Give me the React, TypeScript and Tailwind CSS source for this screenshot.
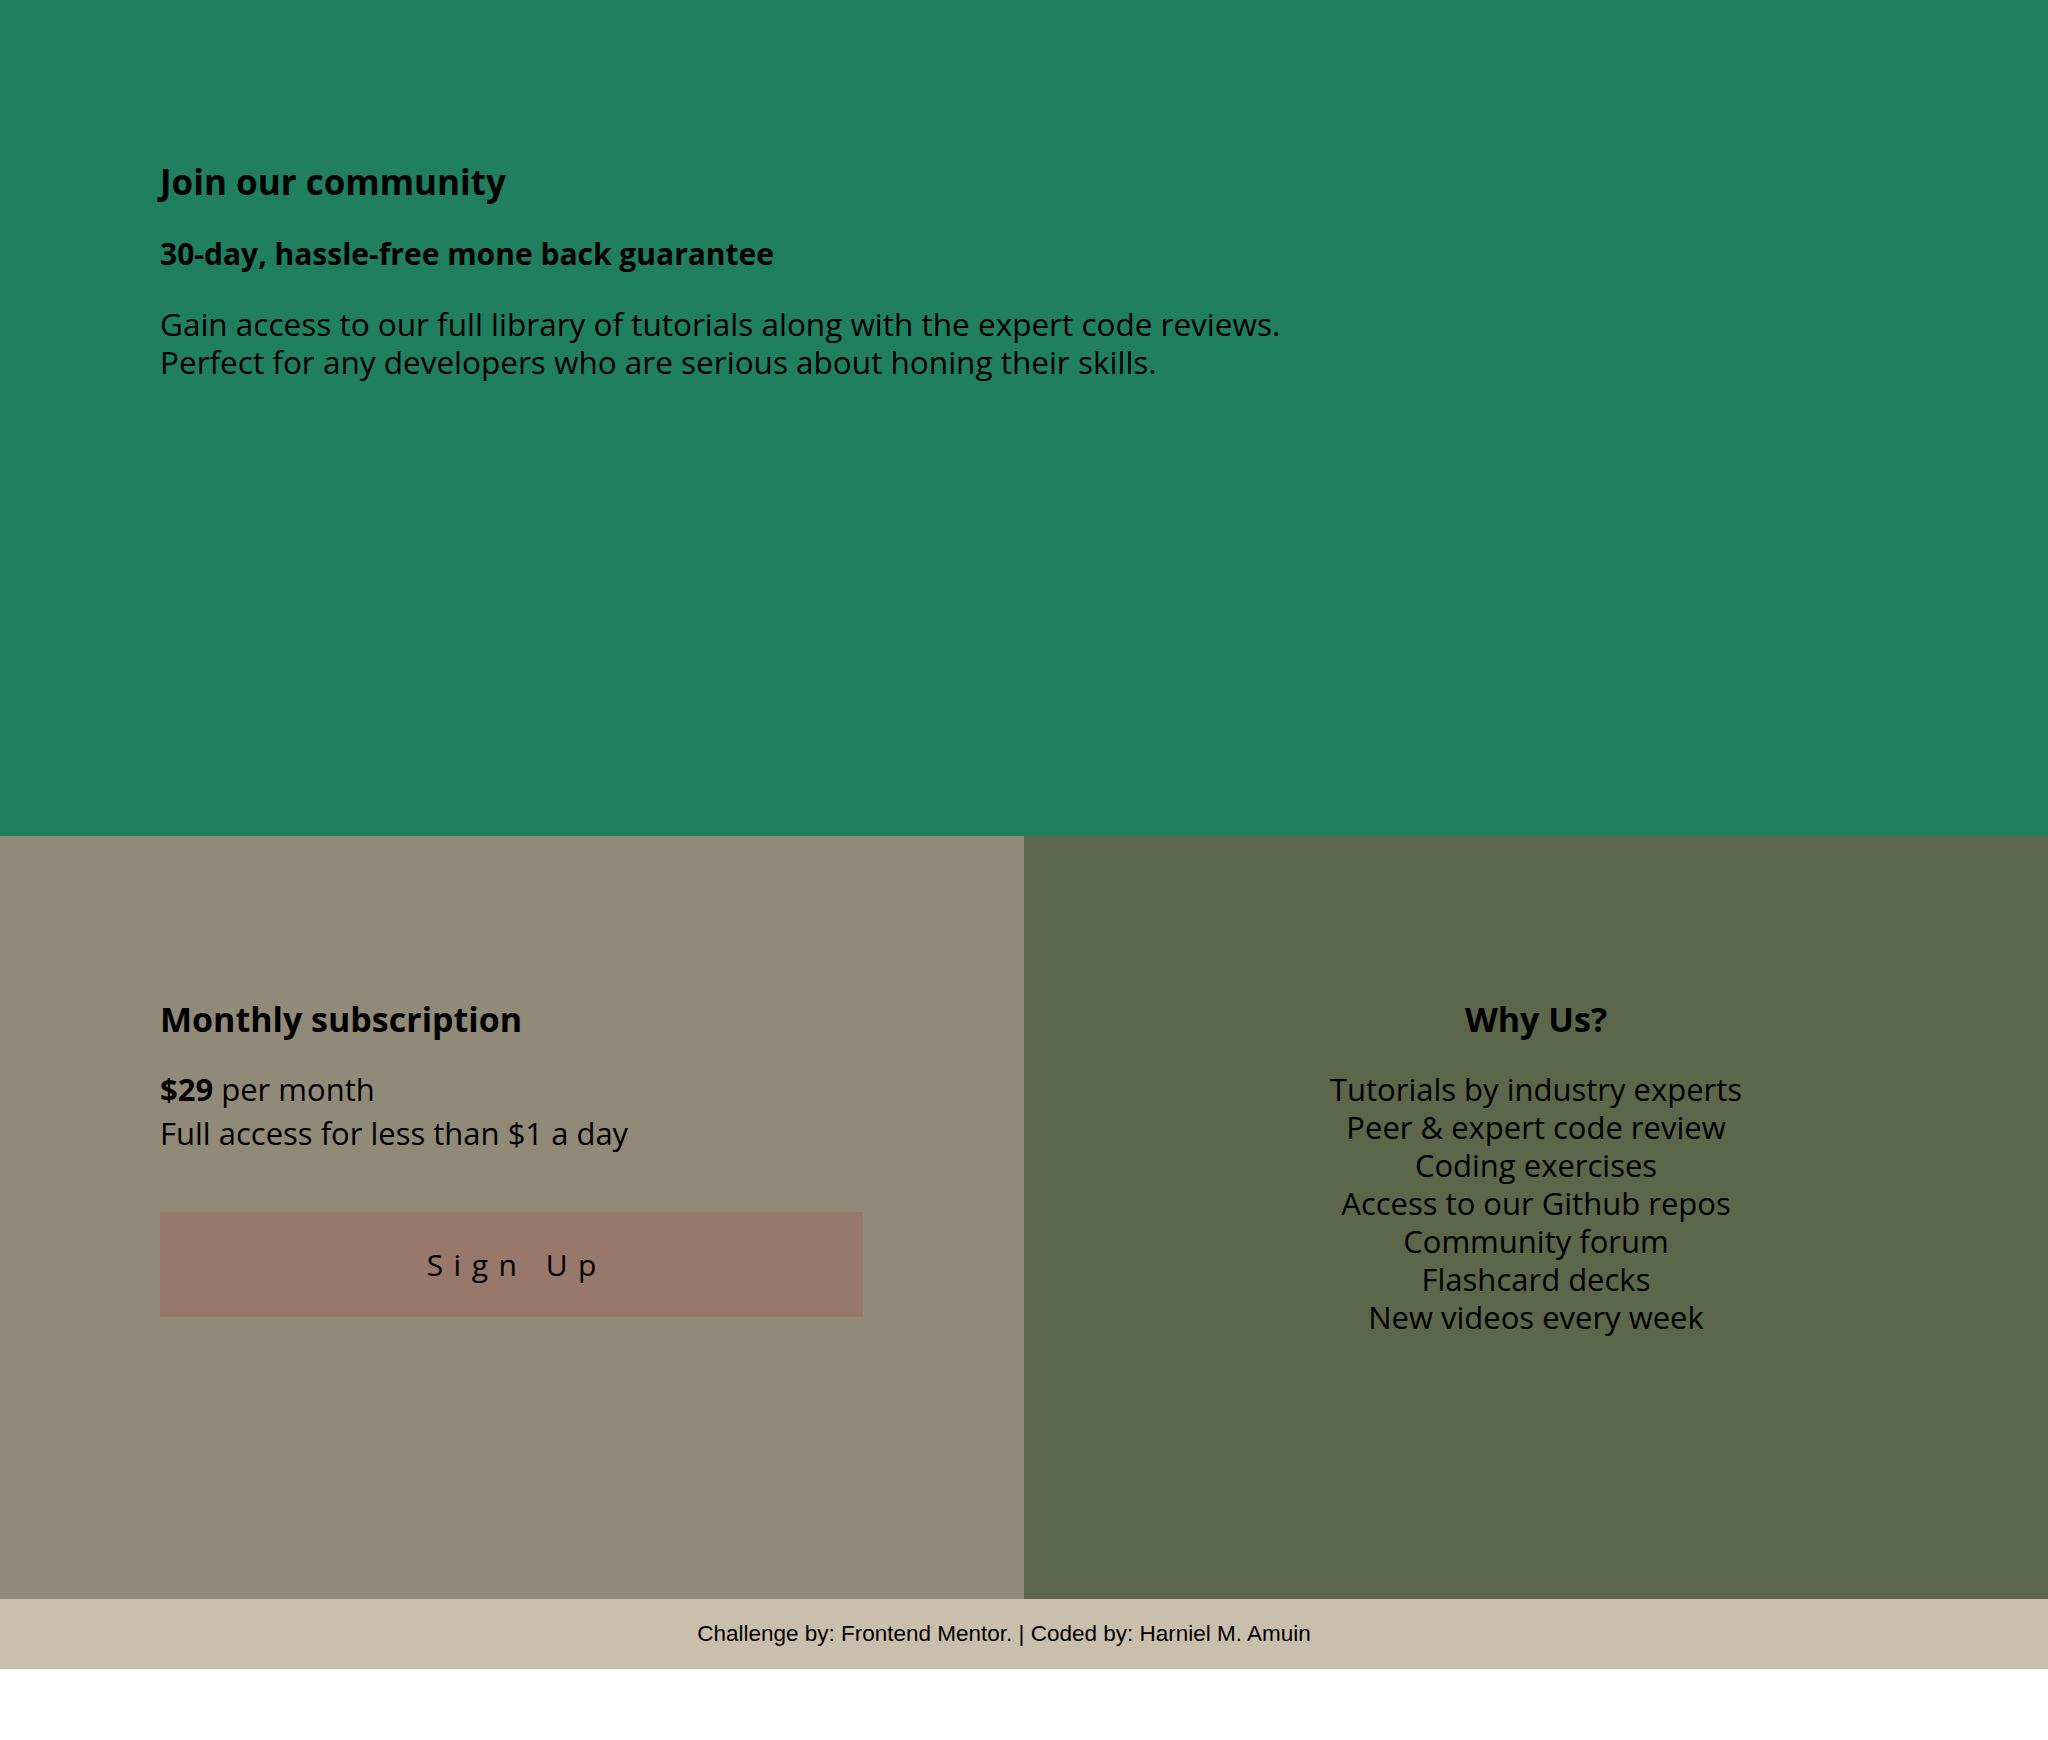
const perks = [
  'Tutorials by industry experts',
  'Peer & expert code review',
  'Coding exercises',
  'Access to our Github repos',
  'Community forum',
  'Flashcard decks',
  'New videos every week',
]

export default function App() {
  return (
    <div className="min-h-[1740px] bg-white font-['Open_Sans',sans-serif] text-black">
      <main>
        <section className="h-[836px] bg-[#1f7f5f] px-[160px] pt-[160px]">
          <h1 className="text-[35px] font-bold leading-[44px]">Join our community</h1>
          <h2 className="mt-[30px] text-[30px] font-bold leading-[40px]">30-day, hassle-free mone back guarantee</h2>
          <p className="mt-[31px] text-[31.5px] leading-[38px]">
            Gain access to our full library of tutorials along with the expert code reviews.
            <br />
            Perfect for any developers who are serious about honing their skills.
          </p>
        </section>

        <div className="grid h-[763px] grid-cols-2">
          <section className="bg-[#928a78] pl-[160px] pt-[160px]">
            <h2 className="text-[34px] font-bold leading-[46px]">Monthly subscription</h2>
            <p className="mt-[25px] text-[31px] leading-[44px]">
              <span className="font-bold">$29</span> per month
            </p>
            <p className="text-[31px] leading-[44px]">Full access for less than $1 a day</p>
            <button className="mt-[57px] flex h-[105px] w-[703px] items-center justify-center bg-[#98786a] pl-[0.35em] text-[30px] tracking-[0.35em] text-black">
              Sign Up
            </button>
          </section>

          <section className="bg-[#5c664a] pt-[160px] text-center">
            <h2 className="text-[34px] font-bold leading-[46px]">Why Us?</h2>
            <ul className="mt-[28px] text-[31px] leading-[38px]">
              {perks.map((perk) => (
                <li key={perk}>{perk}</li>
              ))}
            </ul>
          </section>
        </div>
      </main>

      <footer className="flex h-[70px] items-center justify-center bg-[#c9bfac] pr-[40px] font-['Liberation_Sans',sans-serif] text-[22.5px]">
        Challenge by: Frontend Mentor. | Coded by: Harniel M. Amuin
      </footer>
    </div>
  )
}
